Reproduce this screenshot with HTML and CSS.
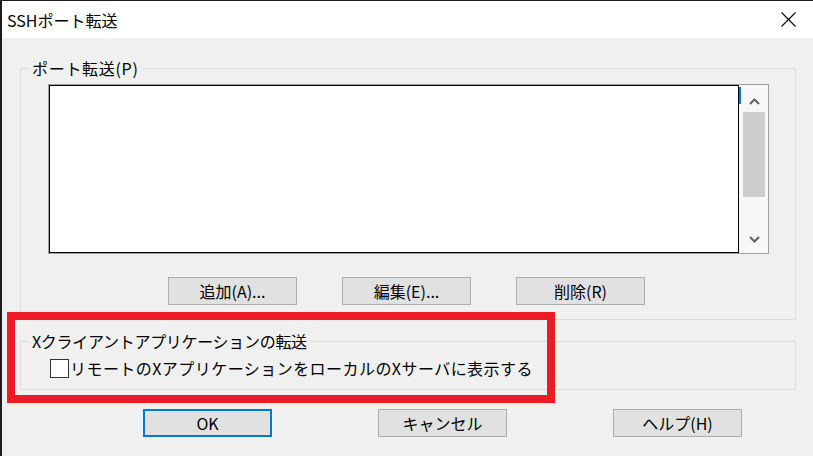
FILE: index.html
```html
<!DOCTYPE html>
<html lang="ja">

<head>
    <meta charset="UTF-8">
    <meta name="viewport" content="width=device-width, initial-scale=1.0">
    <title>SSHポート転送</title>
    <link rel="stylesheet" href="styles.css">
</head>

<body>
    <div class="window">
        <div class="titlebar">
            <span class="title">SSHポート転送</span>
            <svg class="close" width="15" height="15" viewBox="0 0 15 15">
                <path d="M0.5 0.5L14.5 14.5M14.5 0.5L0.5 14.5" stroke="#000" stroke-width="1.1" fill="none" />
            </svg>
        </div>
        <div class="content">
            <fieldset class="group group-port">
                <legend>ポート転送(P)</legend>
                <div class="listbox">
                    <div class="list"></div>
                    <div class="scrollbar">
                        <div class="caret"></div>
                        <div class="sb-btn sb-up">
                            <svg width="11" height="7" viewBox="0 0 11 7">
                                <path d="M1 6L5.5 1.5L10 6" stroke="#606060" stroke-width="2" fill="none" />
                            </svg>
                        </div>
                        <div class="sb-thumb"></div>
                        <div class="sb-btn sb-down">
                            <svg width="11" height="7" viewBox="0 0 11 7">
                                <path d="M1 1L5.5 5.5L10 1" stroke="#606060" stroke-width="2" fill="none" />
                            </svg>
                        </div>
                    </div>
                </div>
                <div class="btn-row">
                    <button class="btn">追加(A)...</button>
                    <button class="btn">編集(E)...</button>
                    <button class="btn">削除(R)</button>
                </div>
            </fieldset>

            <fieldset class="group group-x">
                <legend>Xクライアントアプリケーションの転送</legend>
                <label class="check"><span class="box"></span>リモートのXアプリケーションをローカルのXサーバに表示する</label>
            </fieldset>

            <div class="dialog-buttons">
                <button class="btn btn-default">OK</button>
                <button class="btn">キャンセル</button>
                <button class="btn">ヘルプ(H)</button>
            </div>
        </div>
    </div>
    <div class="highlight"></div>
</body>

</html>
```

FILE: styles.css
```css
* {
    margin: 0;
    padding: 0;
    box-sizing: border-box
}

:root {
    --face: #f0f0f0;
    --frame: #dcdcdc;
    --btn-bg: #e1e1e1;
    --btn-border: #adadad;
    --accent: #0078d7;
    --mark: #ed1c24
}

body {
    width: 813px;
    height: 456px;
    overflow: hidden;
    background: var(--face);
    color: #000;
    font-family: "Noto Sans CJK JP", "Noto Sans", sans-serif;
    font-size: 16px;
    line-height: 18px
}

.window {
    height: 456px;
    border-top: 1px solid #1c1c1c;
    border-left: 2px solid #1c1c1c;
    background: var(--face)
}

.titlebar {
    height: 37px;
    display: flex;
    align-items: center;
    justify-content: space-between;
    padding: 0 17px 0 5px;
    background: #fff
}

.content {
    padding: 21px 17px 0 18px
}

.group {
    border: 1px solid var(--frame);
    margin: 0
}

.group legend {
    padding: 0 3px;
    line-height: 18px
}

.group-port {
    padding: 7px 26px 14px 8px
}

.group-port legend {
    letter-spacing: 0.7px
}

.listbox {
    margin-left: 19px;
    height: 170px;
    display: flex;
    border: 1px solid #a0a0a0
}

.list {
    flex: 1;
    background: #fff;
    border: 1px solid #000
}

.scrollbar {
    position: relative;
    width: 29px;
    display: flex;
    flex-direction: column;
    background: #f7f7f7
}

.caret {
    position: absolute;
    left: 0;
    top: 2px;
    width: 2px;
    height: 17px;
    background: var(--accent)
}

.sb-btn {
    height: 27px;
    display: flex;
    justify-content: center;
    padding-left: 1px
}

.sb-up {
    align-items: flex-end;
    padding-bottom: 7px
}

.sb-down {
    margin-top: auto;
    align-items: flex-start;
    padding-top: 10px
}

.sb-thumb {
    height: 85px;
    margin: 0 3px 0 4px;
    background: #cdcdcd
}

.btn-row {
    display: flex;
    gap: 45px;
    margin-top: 23px;
    padding-left: 139px
}

.btn {
    width: 129px;
    height: 28px;
    background: var(--btn-bg);
    border: 1px solid var(--btn-border);
    font: inherit;
    color: #000;
    line-height: 18px
}

.btn-default {
    border: 2px solid var(--accent)
}

.group-x {
    margin-top: 12px;
    padding: 8px 26px 11px 8px
}

.group-x legend {
    letter-spacing: -0.3px
}

.check {
    display: flex;
    align-items: center;
    height: 20px;
    margin-left: 21px;
    letter-spacing: 0.45px
}

.box {
    width: 19px;
    height: 19px;
    border: 1px solid #333;
    background: #fff;
    margin-right: 1px
}

.dialog-buttons {
    display: flex;
    gap: 106px;
    margin-top: 19px;
    padding-left: 123px
}

.highlight {
    position: absolute;
    left: 7px;
    top: 312px;
    width: 548px;
    height: 91px;
    border: 8px solid var(--mark)
}
```
